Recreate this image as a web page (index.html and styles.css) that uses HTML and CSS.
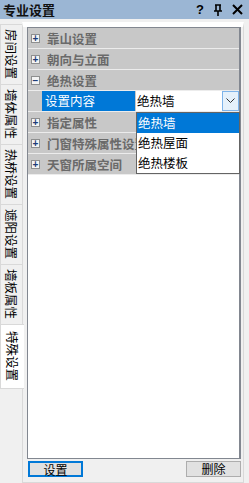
FILE: index.html
```html
<!DOCTYPE html>
<html lang="zh">
<head>
  <meta charset="UTF-8">
  <title>专业设置</title>
  <link rel="stylesheet" href="styles.css">
</head>
<body>

<div class="titlebar">
  <span class="title">专业设置</span>
  <span class="tools">
    <span class="tool">?</span>
    <svg class="tool-pin" width="10" height="12" viewBox="0 0 10 12">
      <path d="M2 1h6M3 1v6M7 1v6M1 7h8M5 7v5" stroke="#000" stroke-width="1.6" fill="none"/>
    </svg>
    <svg class="tool-x" width="11" height="11" viewBox="0 0 11 11">
      <path d="M1 1L10 10M10 1L1 10" stroke="#000" stroke-width="2" fill="none"/>
    </svg>
  </span>
</div>

<div class="main">
  <div class="tabs">
    <div class="tab"><span>房间设置</span></div>
    <div class="tab"><span>墙体属性</span></div>
    <div class="tab"><span>热桥设置</span></div>
    <div class="tab"><span>遮阳设置</span></div>
    <div class="tab"><span>墙板属性</span></div>
    <div class="tab active"><span>特殊设置</span></div>
  </div>

  <div class="page">
    <div class="grid">
      <div class="row cat"><span class="exp">+</span>靠山设置</div>
      <div class="row cat"><span class="exp">+</span>朝向与立面</div>
      <div class="row cat"><span class="exp">−</span>绝热设置</div>
      <div class="row sub">
        <div class="label">设置内容</div>
        <div class="value">
          绝热墙
          <span class="drop-btn">
            <svg width="9" height="6" viewBox="0 0 9 6"><path d="M0.5 0.5L4.5 4.5L8.5 0.5" stroke="#333" fill="none"/></svg>
          </span>
          <!-- open dropdown list -->
          <div class="drop-list">
            <div class="opt selected">绝热墙</div>
            <div class="opt">绝热屋面</div>
            <div class="opt">绝热楼板</div>
          </div>
        </div>
      </div>
      <div class="row cat"><span class="exp">+</span>指定属性</div>
      <div class="row cat"><span class="exp">+</span>门窗特殊属性设置</div>
      <div class="row cat"><span class="exp">+</span>天窗所属空间</div>
    </div>

    <div class="buttons">
      <button class="btn default">设置</button>
      <button class="btn">删除</button>
    </div>
  </div>
</div>

</body>
</html>
```

FILE: styles.css
```css
body {
  margin: 0;
  width: 249px;
  height: 483px;
  background: #f0f0f0;
  font-family: "Noto Sans CJK SC", "Liberation Sans", sans-serif;
  font-size: 12px;
  overflow: hidden;
}

.titlebar {
  height: 19px;
  background: #9bb6d4;
  display: flex;
  align-items: center;
  justify-content: space-between;
  padding: 0 6px 0 3px;
}
.title {
  font-size: 13px;
  font-weight: bold;
  color: #111;
}
.tools {
  display: flex;
  align-items: center;
  gap: 9px;
}
.tool {
  font-family: "Liberation Sans", sans-serif;
  font-weight: bold;
  font-size: 13px;
}

.main {
  display: flex;
  padding-top: 3px;
}

.tabs {
  width: 22px;
  padding-top: 2px;
  display: flex;
  flex-direction: column;
}
.tab {
  height: 59px;
  border: 1px solid #d9d9d9;
  border-right: none;
  background: #f0f0f0;
  display: flex;
  align-items: center;
  justify-content: center;
  margin-bottom: -1px;
  color: #000;
}
.tab span {
  writing-mode: vertical-rl;
  text-orientation: sideways;
  font-size: 12.5px;
}
.tab.active {
  height: 63px;
  background: #fff;
  margin-right: -2px;
  position: relative;
  z-index: 1;
}

.page {
  width: 214px;
  height: 455px;
  border: 1px solid #d9d9d9;
  border-top: 5px solid #fff;
  padding: 0 2px 0 4px;
  display: flex;
  flex-direction: column;
}

.grid {
  flex: 1;
  border: 1px solid #828790;
  border-right-width: 2px;
  background: #fff;
}

.row {
  height: 20px;
  border-bottom: 1px solid #ececec;
  background: #c8c8c8;
  display: flex;
  align-items: center;
  white-space: nowrap;
}
.cat {
  color: #6a6a6a;
  font-weight: bold;
  font-size: 12.5px;
}
.exp {
  width: 7px;
  height: 7px;
  border: 1px solid #8e8f8f;
  background: #f4f4f4;
  margin: 0 7px 0 3px;
  font-family: "Liberation Sans", sans-serif;
  font-size: 10px;
  line-height: 7px;
  text-align: center;
  color: #1c3c78;
  font-weight: bold;
}

.sub {
  padding-left: 14px;
}
.label {
  width: 93px;
  height: 20px;
  line-height: 20px;
  background: #0078d7;
  color: #fff;
  padding-left: 3px;
  box-sizing: border-box;
  font-size: 12.5px;
}
.value {
  flex: 1;
  height: 20px;
  line-height: 20px;
  background: #fff;
  margin-left: 1px;
  padding-left: 1px;
  position: relative;
  color: #000;
  font-size: 12.5px;
}
.drop-btn {
  position: absolute;
  right: 0;
  top: 0;
  width: 15px;
  height: 18px;
  border: 1px solid #7eb4ea;
  background: #e5f1fb;
  display: flex;
  align-items: center;
  justify-content: center;
}

.drop-list {
  position: absolute;
  left: 0;
  right: -1px;
  top: 21px;
  border: 1px solid #646464;
  background: #fff;
  z-index: 2;
}
.opt {
  height: 20px;
  line-height: 20px;
  padding-left: 1px;
  color: #000;
}
.opt.selected {
  background: #0078d7;
  color: #fff;
}

.buttons {
  height: 21px;
  display: flex;
  justify-content: space-between;
  align-items: flex-start;
  padding: 2px 0 0 1px;
}
.btn {
  width: 55px;
  height: 16px;
  padding: 0;
  background: #e1e1e1;
  border: 1px solid #adadad;
  font-family: "Noto Sans CJK SC", sans-serif;
  font-size: 12px;
  line-height: 14px;
  color: #000;
}
.btn.default {
  border: 2px solid #0078d7;
}
```
